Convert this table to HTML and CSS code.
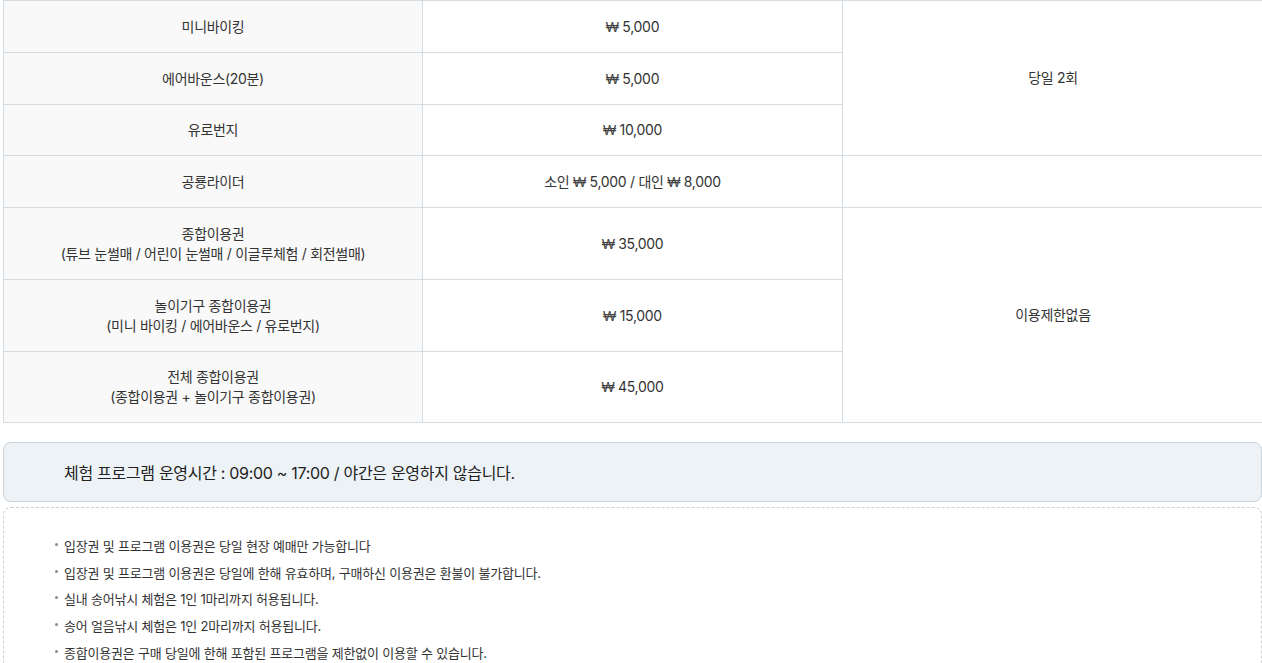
FILE: index.html
```html
<!DOCTYPE html>
<html lang="ko">
<head>
<meta charset="utf-8">
<title>이용요금</title>
<link rel="stylesheet" href="styles.css">
</head>
<body>
<div class="page">
  <table class="price">
    <colgroup>
      <col class="c1"><col class="c2"><col class="c3">
    </colgroup>
    <tbody>
      <tr class="r1"><th>미니바이킹</th><td><span class="won">₩</span> 5,000</td><td rowspan="3">당일 2회</td></tr>
      <tr class="r1"><th>에어바운스(20분)</th><td><span class="won">₩</span> 5,000</td></tr>
      <tr class="r1b"><th>유로번지</th><td><span class="won">₩</span> 10,000</td></tr>
      <tr class="r1"><th>공룡라이더</th><td>소인 <span class="won">₩</span> 5,000 / 대인 <span class="won">₩</span> 8,000</td><td></td></tr>
      <tr class="r2"><th>종합이용권<br>(튜브 눈썰매 / 어린이 눈썰매 / 이글루체험 / 회전썰매)</th><td><span class="won">₩</span> 35,000</td><td rowspan="3">이용제한없음</td></tr>
      <tr class="r2"><th>놀이기구 종합이용권<br>(미니 바이킹 / 에어바운스 / 유로번지)</th><td><span class="won">₩</span> 15,000</td></tr>
      <tr class="r2b"><th>전체 종합이용권<br>(종합이용권 + 놀이기구 종합이용권)</th><td><span class="won">₩</span> 45,000</td></tr>
    </tbody>
  </table>

  <div class="notice">체험 프로그램 운영시간 : 09:00 ~ 17:00 / 야간은 운영하지 않습니다.</div>

  <div class="info">
    <ul class="info-list">
      <li>입장권 및 프로그램 이용권은 당일 현장 예매만 가능합니다</li>
      <li>입장권 및 프로그램 이용권은 당일에 한해 유효하며, 구매하신 이용권은 환불이 불가합니다.</li>
      <li>실내 송어낚시 체험은 1인 1마리까지 허용됩니다.</li>
      <li>송어 얼음낚시 체험은 1인 2마리까지 허용됩니다.</li>
      <li>종합이용권은 구매 당일에 한해 포함된 프로그램을 제한없이 이용할 수 있습니다.</li>
    </ul>
  </div>
</div>
</body>
</html>
```

FILE: styles.css
```css
html, body {
  margin: 0;
  padding: 0;
  background: #ffffff;
  overflow: hidden;
}

body {
  font-family: Inter, "Noto Sans CJK KR", sans-serif;
  color: #333333;
}

.page {
  width: 1259px;
  padding-left: 3px;
}

.price {
  width: 1260px;
  border-collapse: collapse;
  table-layout: fixed;
  font-size: 14px;
  letter-spacing: -0.3px;
  color: #333333;
}

.price .c1 { width: 419px; }
.price .c2 { width: 420px; }
.price .c3 { width: 421px; }

.price th,
.price td {
  border: 1px solid #d3dbe3;
  text-align: center;
  vertical-align: middle;
  padding: 0 10px;
  line-height: 20px;
  font-weight: 400;
}

.price th {
  background: #f9f9f9;
}

.price td {
  background: #ffffff;
}

.won {
  font-family: "Liberation Sans", sans-serif;
  color: #444444;
}

.price .r1 { height: 52px; }
.price .r1b { height: 51px; }
.price .r2 { height: 72px; }
.price .r2b { height: 71px; }

.notice {
  margin-top: 19px;
  height: 58px;
  box-sizing: content-box;
  border: 1px solid #c9d3dc;
  border-radius: 8px;
  background: #edf2f6;
  display: flex;
  align-items: center;
  padding-left: 60px;
  font-size: 16px;
  letter-spacing: -0.3px;
  color: #222222;
  width: 1197px;
}

.info {
  margin-top: 5px;
  border: 1px dashed #cfcfcf;
  border-bottom: none;
  border-radius: 8px 8px 0 0;
  padding: 28px 0 0 50px;
  width: 1207px;
}

.info-list {
  list-style: none;
  margin: 0;
  padding: 0;
  display: flex;
  flex-direction: column;
  gap: 6.7px;
}

.info-list li {
  position: relative;
  padding-left: 10px;
  font-size: 13px;
  line-height: 20px;
  letter-spacing: -0.2px;
  color: #333333;
}

.info-list li::before {
  content: "";
  position: absolute;
  left: 1px;
  top: 7px;
  width: 3px;
  height: 3px;
  border-radius: 50%;
  background: #8a8a8a;
}
```
